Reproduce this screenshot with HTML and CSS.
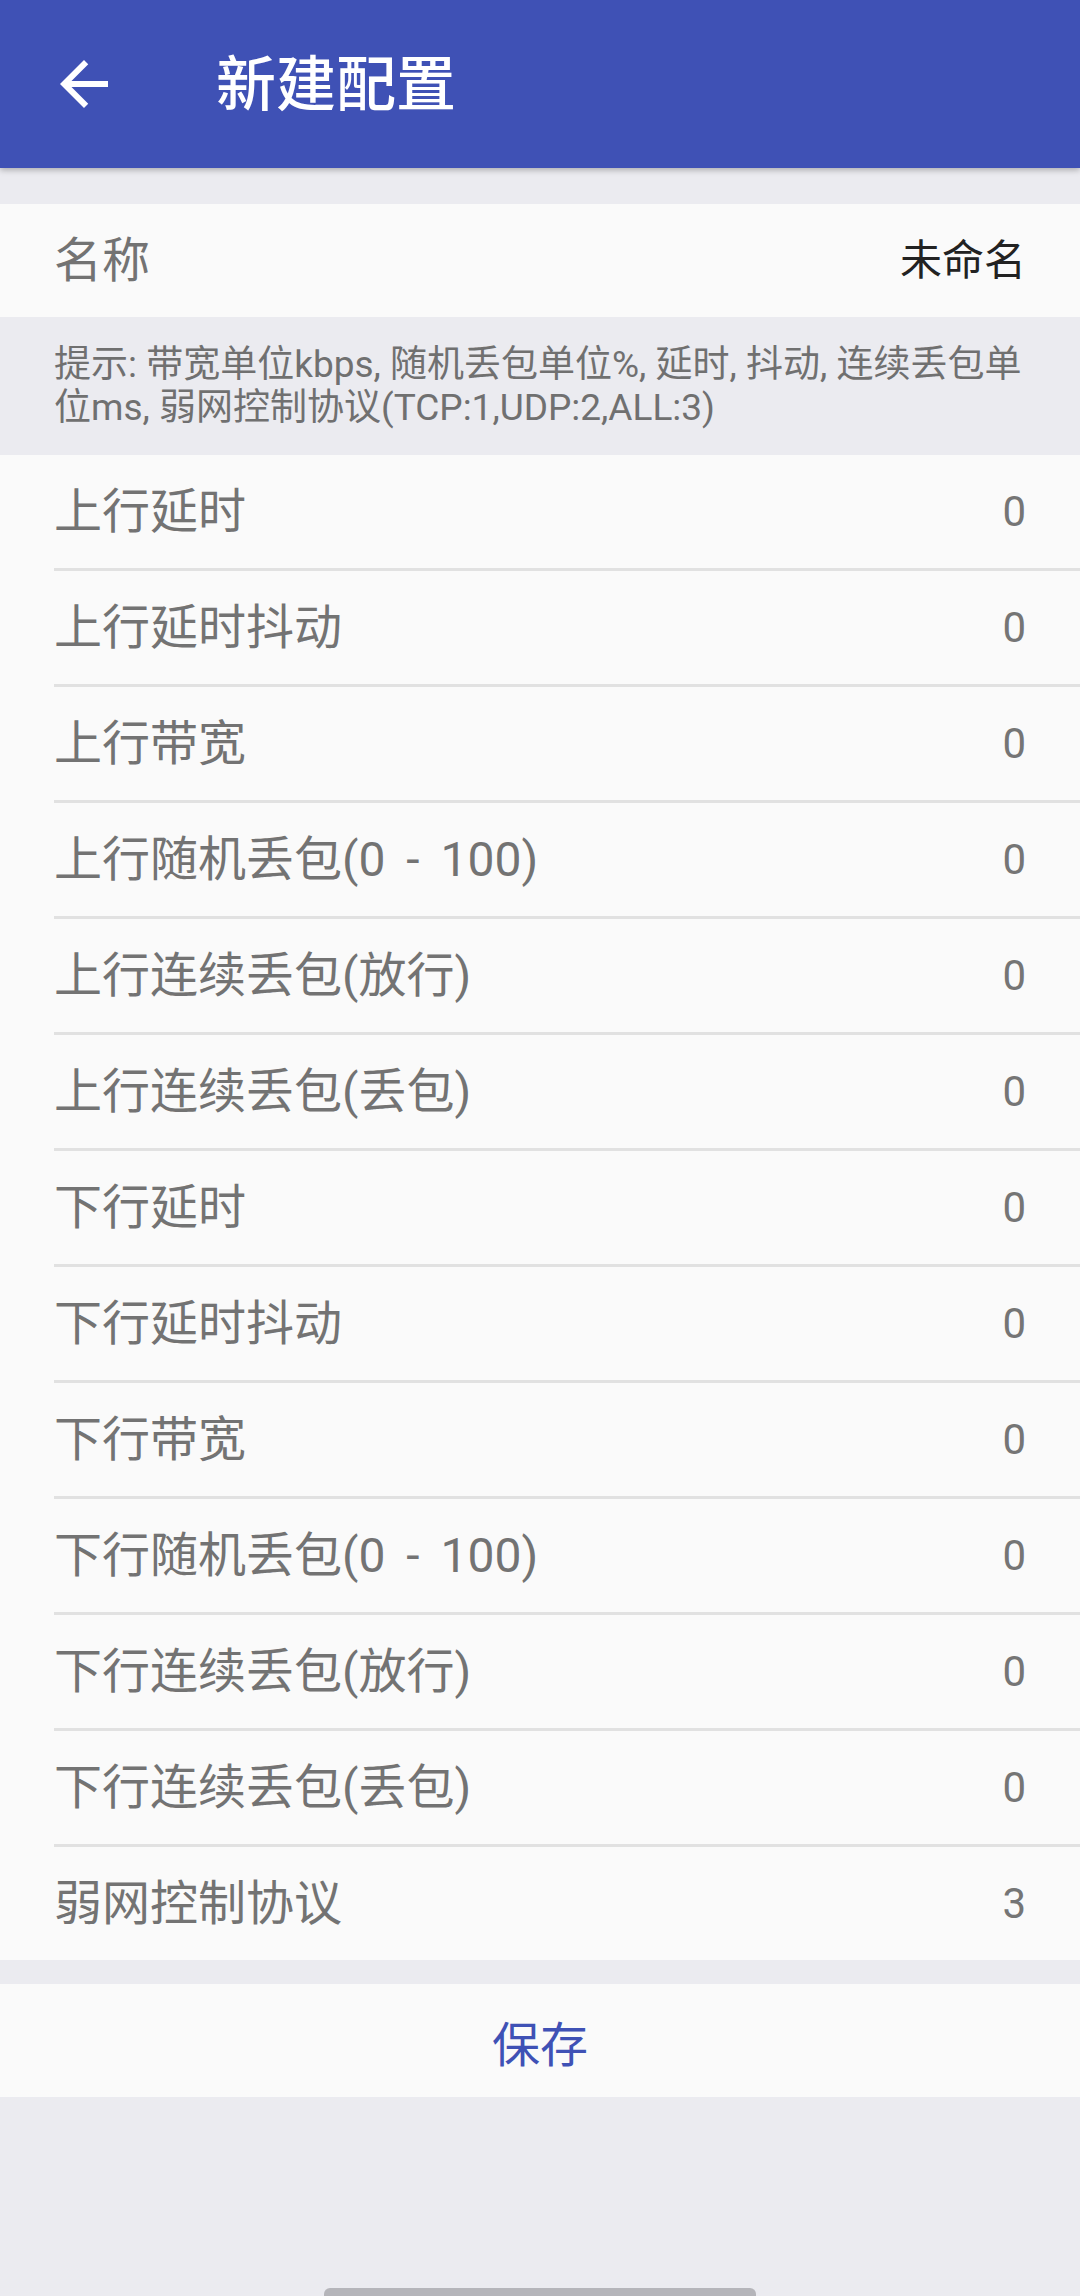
FILE: index.html
```html
<!DOCTYPE html>
<html lang="zh-CN">
<head>
<meta charset="utf-8">
<title>新建配置</title>
<link rel="stylesheet" href="styles.css">
</head>
<body>
<header class="appbar">
  <div class="nav">
    <svg viewBox="0 0 24 24" width="72" height="72"><path fill="#fff" d="M20 11H7.83l5.59-5.59L12 4l-8 8 8 8 1.41-1.41L7.83 13H20v-2z"/></svg>
  </div>
  <h1 class="title">新建配置</h1>
</header>
<main class="content">
  <section class="group">
    <div class="row"><div class="row-inner"><span class="label">名称</span><span class="value dark">未命名</span></div></div>
  </section>
  <p class="hint">提示: 带宽单位kbps, 随机丢包单位%, 延时, 抖动, 连续丢包单<br>位ms, 弱网控制协议(TCP:1,UDP:2,ALL:3)</p>
  <section class="group list">
    <div class="row"><div class="row-inner"><span class="label">上行延时</span><span class="value">0</span></div></div>
    <div class="row"><div class="row-inner"><span class="label">上行延时抖动</span><span class="value">0</span></div></div>
    <div class="row"><div class="row-inner"><span class="label">上行带宽</span><span class="value">0</span></div></div>
    <div class="row"><div class="row-inner"><span class="label">上行随机丢包(0 - 100)</span><span class="value">0</span></div></div>
    <div class="row"><div class="row-inner"><span class="label">上行连续丢包(放行)</span><span class="value">0</span></div></div>
    <div class="row"><div class="row-inner"><span class="label">上行连续丢包(丢包)</span><span class="value">0</span></div></div>
    <div class="row"><div class="row-inner"><span class="label">下行延时</span><span class="value">0</span></div></div>
    <div class="row"><div class="row-inner"><span class="label">下行延时抖动</span><span class="value">0</span></div></div>
    <div class="row"><div class="row-inner"><span class="label">下行带宽</span><span class="value">0</span></div></div>
    <div class="row"><div class="row-inner"><span class="label">下行随机丢包(0 - 100)</span><span class="value">0</span></div></div>
    <div class="row"><div class="row-inner"><span class="label">下行连续丢包(放行)</span><span class="value">0</span></div></div>
    <div class="row"><div class="row-inner"><span class="label">下行连续丢包(丢包)</span><span class="value">0</span></div></div>
    <div class="row"><div class="row-inner"><span class="label">弱网控制协议</span><span class="value">3</span></div></div>
  </section>
  <div class="save">保存</div>
</main>
<div class="home-indicator"></div>
</body>
</html>
```

FILE: styles.css
```css
html, body {
  margin: 0;
  padding: 0;
}
body {
  width: 1080px;
  min-height: 2296px;
  background: #ebebf0;
  font-family: Roboto, "Noto Sans CJK SC", sans-serif;
  overflow: hidden;
}
.appbar {
  position: relative;
  z-index: 2;
  height: 168px;
  background: #3f51b5;
  display: flex;
  align-items: center;
  box-shadow: 0 2px 6px rgba(0, 0, 0, 0.28);
}
.nav {
  width: 72px;
  height: 72px;
  margin-left: 48px;
  display: flex;
}
.title {
  margin: 0 0 0 96px;
  color: #fff;
  font-size: 60px;
  font-weight: 500;
  line-height: 1;
  padding-top: 4px;
}
.content {
  padding-top: 36px;
}
.group {
  background: #fafafa;
}
.row {
  padding-left: 54px;
}
.row-inner {
  height: 113px;
  display: flex;
  align-items: center;
  justify-content: space-between;
  padding-right: 54px;
  border-bottom: 3px solid #e1e1e1;
}
.row:last-child .row-inner {
  border-bottom: none;
}
.label {
  font-size: 48px;
  color: #737373;
  line-height: 1;
  word-spacing: 9px;
}
.value {
  font-size: 42px;
  color: #757575;
  line-height: 1;
}
.value.dark {
  color: #222;
}
.hint {
  margin: 0;
  height: 138px;
  box-sizing: border-box;
  padding: 0 54px;
  display: flex;
  flex-direction: column;
  justify-content: center;
  font-size: 37px;
  line-height: 43px;
  color: #707070;
}
.save {
  margin-top: 24px;
  height: 113px;
  background: #fafafa;
  display: flex;
  align-items: center;
  justify-content: center;
  font-size: 48px;
  color: #3f51b5;
}
.home-indicator {
  position: fixed;
  left: 324px;
  bottom: 0;
  width: 432px;
  height: 8px;
  border-radius: 6px 6px 0 0;
  background: #b5b5ba;
}
```
